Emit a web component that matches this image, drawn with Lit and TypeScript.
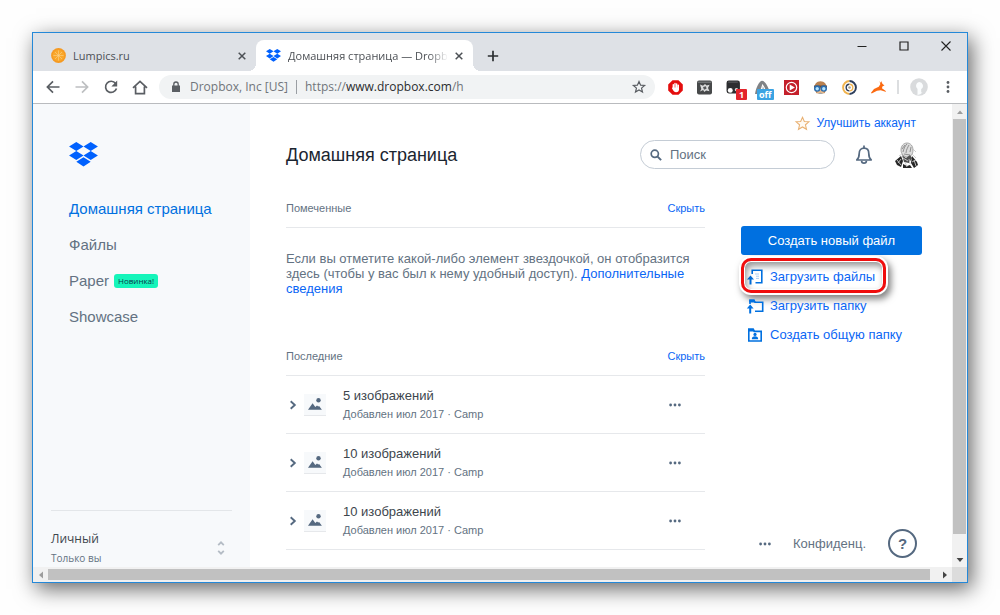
import { LitElement, html, css, svg } from "lit";
import { customElement, property } from "lit/decorators.js";

const diamonds = "M7.5 0 15 4.7 7.5 9.4 0 4.7zM22.5 0 30 4.7 22.5 9.4 15 4.7zM7.5 9.4 15 14.1 7.5 18.8 0 14.1zM22.5 9.4 30 14.1 22.5 18.8 15 14.1zM15 15.8 22.5 20.5 15 25.4 7.5 20.5z";

const glyphs: Record<string, { box: string; body: unknown }> = {
  orange: {
    box: "0 0 15 15",
    body: svg`<circle cx="7.5" cy="7.5" r="7.4" fill="#f59a23"/><circle cx="7.5" cy="7.5" r="5.8" fill="#f9a72b"/><path d="M7.5 2.400v10.200M2.400 7.500h10.200M4 4l7 7M11 4l-7 7" stroke="#fbd48b" stroke-width=".6"/>`,
  },
  dropbox: { box: "0 0 30 26", body: svg`<path fill="#0061fe" d=${diamonds}/>` },
  close: { box: "0 0 8 8", body: svg`<path d="M.7.7l6.600 6.600M7.300.7L.7 7.300" stroke="#4c5055" stroke-width="1.500"/>` },
  plus: { box: "0 0 12 12", body: svg`<path d="M6 .8v10.400M.8 6h10.400" stroke="#2b2e31" stroke-width="1.700"/>` },
  minimize: { box: "0 0 10 10", body: svg`<path d="M.5 5.500h9" stroke="#222" stroke-width="1"/>` },
  maximize: { box: "0 0 10 10", body: svg`<path d="M1 1h8v8H1z" fill="none" stroke="#222" stroke-width="1.200"/>` },
  quit: { box: "0 0 10 10", body: svg`<path d="M.5.5l9 9M9.500.5l-9 9" stroke="#222" stroke-width="1.100"/>` },
  back: { box: "0 0 14 14", body: svg`<path d="M13.500 7H1.800M7 1.400L1.400 7 7 12.600" fill="none" stroke="#5a5e63" stroke-width="1.700"/>` },
  forward: { box: "0 0 14 14", body: svg`<path d="M.5 7h11.700M7 1.400L12.600 7 7 12.600" fill="none" stroke="#bdbfc1" stroke-width="1.700"/>` },
  reload: { box: "0 0 14 14", body: svg`<path d="M11.600 3.400A5.600 5.600 0 1 0 12.500 8.600" fill="none" stroke="#5a5e63" stroke-width="1.700"/><path d="M13.200.6v5.800H7.400z" fill="#5a5e63"/>` },
  home: { box: "0 0 16 15", body: svg`<path d="M1 7.800L8 1.400l7 6.400M3.600 6.600V13.600h8.800V6.600" fill="none" stroke="#5a5e63" stroke-width="1.700"/>` },
  lock: { box: "0 0 10 12", body: svg`<path d="M1 4.600h8V11H1z" fill="#5a5e63"/><path d="M2.800 5V3.200a2.200 2.200 0 0 1 4.400 0V5" fill="none" stroke="#5a5e63" stroke-width="1.300"/>` },
  star: { box: "0 0 14 14", body: svg`<path d="M7 1.500l1.600 3.700 4 .3-3.050 2.600.95 3.900L7 9.900 3.500 12l.95-3.900L1.400 5.500l4-.3z" fill="none" stroke="#5a5e63" stroke-width="1.200"/>` },
  goldStar: { box: "0 0 14 14", body: svg`<path d="M7 1.200l1.700 3.900 4.300.3-3.250 2.800 1 4.200L7 10.200l-3.750 2.200 1-4.200L1 5.400l4.300-.3z" fill="#fffaf3" stroke="#e9b173" stroke-width="1"/>` },
  hand: {
    box: "0 0 15 15",
    body: svg`<path d="M4.500.2h6l4.300 4.300v6l-4.300 4.300h-6L.2 10.500v-6z" fill="#e40d0d"/><g stroke="#fff" stroke-width="1.400" stroke-linecap="round"><path d="M5.300 4.600v4M7 3.500v4M8.700 3.900v4M10.300 5.300v4"/></g><path d="M4.600 7.500h6.400v1.800a2.900 2.900 0 0 1-2.900 2.900c-1.700 0-2.400-.8-3.300-2.400L3.900 8z" fill="#fff"/>`,
  },
  photo: {
    box: "0 0 15 15",
    body: svg`<rect width="15" height="14" y=".5" rx="2" fill="#47494a"/><path d="M1 1.500h13v1.500H1z" fill="#6f7273"/><path d="M3 11.500l1.300-2.500L3 4.500l3 1.300L8 4l1.600 1.600 3-.9-1.600 3.300 1.500 3.300-3.400-.8-1.700 1.600-1.300-2z" fill="#dcdddd"/><path d="M6 7l3-.8.500 2.500-2.500 1z" fill="#55585a"/>`,
  },
  mask: { box: "0 0 14 14", body: svg`<rect x=".5" y=".5" width="12.500" height="12" rx="2.200" fill="#2d2e30"/><path d="M2 2h9" stroke="#5c5e61" stroke-width="1"/><circle cx="4" cy="9.700" r="2.300" fill="#fff"/><circle cx="9.800" cy="9" r="1.600" fill="#dcdcdc"/>` },
  peak: { box: "0 0 14 14", body: svg`<path d="M0 13C1 7 4 1 6.600.8 9.500.9 13 7 14 13h-3.200C10 8.500 8.500 5.500 6.800 3.800 6 7.800 4.500 11 2.500 13z" fill="#808386"/><path d="M7.300 5.500C7 9 5.500 11.500 4 13h3.500L9 9z" fill="#b9bbbd"/>` },
  play: { box: "0 0 15 15", body: svg`<path d="M0 0h15v15H0z" fill="#c4202b"/><circle cx="7.500" cy="7.500" r="5.200" fill="none" stroke="#fff" stroke-width="1.200"/><path d="M5.700 4.400l5.200 3.100-5.200 3.100z" fill="#fff"/>` },
  pilot: {
    box: "0 0 15 15",
    body: svg`<path d="M1.500 9C1 4 3.500 1.200 7.500 1.200S14 4 13.500 9l-2 4.300h-8z" fill="#b98150"/><path d="M4 8h7v3.500a3.500 2.500 0 0 1-7 0z" fill="#e9ba8c"/><path d="M1 5.500h13v2H1z" fill="#6b4b35"/><circle cx="4.200" cy="8.500" r="3.200" fill="#2b6cad"/><circle cx="10.800" cy="8.500" r="3.200" fill="#2b6cad"/><circle cx="4.200" cy="8.700" r="1.700" fill="#b5e4ff"/><circle cx="10.800" cy="8.700" r="1.700" fill="#b5e4ff"/><path d="M5 13.500c1.500-.9 3.500-.9 5 0z" fill="#5e8fb8"/>`,
  },
  ring: {
    box: "0 0 14 14",
    body: svg`<path d="M7 1A6 6 0 0 0 7 13" fill="none" stroke="#f0b34e" stroke-width="1.800"/><path d="M7 1A6 6 0 0 1 7 13" fill="none" stroke="#2e3f5c" stroke-width="1.800"/><path d="M7 3.900A3.100 3.100 0 0 0 7 10.100" fill="none" stroke="#2e3f5c" stroke-width="1.300"/><path d="M7 3.900A3.100 3.100 0 0 1 7 10.100" fill="none" stroke="#f0b34e" stroke-width="1.300"/><circle cx="7" cy="7" r="1.200" fill="#a9a18e"/>`,
  },
  deer: { box: "0 0 14 14", body: svg`<path d="M0 11.800l2.800-3.300 4.400-2.300L8.700 4 8 1.200l1.400 1.600.4-2 .8 2.800 2 1.500-1.800.8-.6 1.800 3.900 2.700-.6.600-4.400-1.400-3.500.4L.6 12.600z" fill="#fb6a11"/>` },
  person: { box: "0 0 18 18", body: svg`<circle cx="9" cy="9" r="8.800" fill="#d9dbdd"/><path d="M9 4a3.800 3.800 0 0 1 2.200 7v3.500H12.500A7 7 0 0 1 7.500 17v-6A4 4 0 0 1 9 4z" fill="#fbfdfe"/>` },
  menu: { box: "0 0 4 14", body: svg`<g fill="#5a5e63"><circle cx="2" cy="2.500" r="1.400"/><circle cx="2" cy="7" r="1.400"/><circle cx="2" cy="11.500" r="1.400"/></g>` },
  search: { box: "0 0 12 12", body: svg`<circle cx="4.800" cy="4.800" r="3.600" fill="none" stroke="#556980" stroke-width="1.700"/><path d="M7.600 7.600l3.500 3.500" stroke="#556980" stroke-width="2"/>` },
  bell: { box: "0 0 18 20", body: svg`<path d="M1.800 15c2-1.800 2.400-3.600 2.400-6.500 0-3.300 2-5.300 4.800-5.300s4.800 2 4.800 5.300c0 2.900.4 4.700 2.400 6.500z" fill="none" stroke="#556980" stroke-width="1.700" stroke-linejoin="round"/><path d="M9 .6v3M6.600 15.800a2.400 2.400 0 0 0 4.800 0" fill="none" stroke="#556980" stroke-width="1.700"/>` },
  portrait: {
    box: "0 0 28 28",
    body: svg`<path d="M8 9c0-4 2.500-7 6-7s6 3 6 7-2 7-5.500 7S8 13 8 9z" fill="#dcdcdc" stroke="#8a8a8a" stroke-width=".7"/><path d="M10 11c1-4 2-6 4-8M13 12c0-3 2-6 3-8M17 11l1-5M9 8l3-4M11 13l6 1" stroke="#6f6f6f" stroke-width=".7" fill="none"/><path d="M9 14l4 3 4-3 2 3-3 5-5-1z" fill="#505050"/><path d="M2 20l6-5 2 5-2 6-4-2zM19 15l5 6 1 3-4 3-3-5zM10 23l4 2 3-1 2 3h-9z" fill="#262626"/><path d="M5 22l3-4M21 19l2 6M12 21l2 5M16 18l1 5M6 15l3-2M19 13l4 4M20 8l3 3M4 19l4 5M19 21l4-2M10 17l5 3" stroke="#c9c9c9" stroke-width=".9"/>`,
  },
  uploadFile: { box: "0 0 16 16", body: svg`<path d="M5.200 5V1.200h9.600v12.600H8.500" fill="none" stroke="#0070e0" stroke-width="1.600"/><path d="M8 5h4M9 7.200h3M9 9.400h3" stroke="#a9cdf5" stroke-width="1"/><path d="M3.500 15.500V9" stroke="#0070e0" stroke-width="2"/><path d="M0 10.500l3.500-4 3.500 4z" fill="#0070e0"/>` },
  uploadFolder: { box: "0 0 16 16", body: svg`<path d="M3 6V2.300h4l1 2h7.700v8.900H8" fill="none" stroke="#0070e0" stroke-width="1.600"/><path d="M2.300 1.500h5.100l1.300 3H2.300z" fill="#0070e0"/><path d="M3.200 15.500V9" stroke="#0070e0" stroke-width="2"/><path d="M-.2 10.500l3.400-4 3.400 4z" fill="#0070e0"/>` },
  sharedFolder: { box: "0 0 16 16", body: svg`<path d="M1.800 14V2.400h4.400l1 2h7V14z" fill="none" stroke="#0070e0" stroke-width="1.600"/><path d="M1 1.600h5.700l1.300 2.800H1z" fill="#0070e0"/><circle cx="8" cy="7.400" r="1.600" fill="#0070e0"/><path d="M4.800 12.200c0-2 1.300-2.900 3.200-2.900s3.200.9 3.200 2.900z" fill="#0070e0"/>` },
  chevron: { box: "0 0 8 10", body: svg`<path d="M1.700 1.200L5.800 5l-4.100 3.800" fill="none" stroke="#556980" stroke-width="1.900"/>` },
  picture: { box: "0 0 16 14", body: svg`<circle cx="11.500" cy="3.200" r="2.200" fill="#556980"/><path d="M1 12.700l4.600-6.500 2.700 3.900 1.700-1.700 1.200 1.200.9-.7 2.800 3.800z" fill="#556980"/>` },
  dots: { box: "0 0 12 4", body: svg`<g fill="#556980"><circle cx="1.600" cy="2" r="1.400"/><circle cx="6" cy="2" r="1.400"/><circle cx="10.400" cy="2" r="1.400"/></g>` },
  sorter: { box: "0 0 8 14", body: svg`<path d="M1.200 4.200L4 1.300l2.800 2.900M1.200 9.800L4 12.700l2.800-2.900" fill="none" stroke="#b4bcc5" stroke-width="1.800"/>` },
  up: { box: "0 0 8 8", body: svg`<path d="M1 6l3-3.600L7 6z" fill="#9d9d9d"/>` },
  down: { box: "0 0 8 8", body: svg`<path d="M.6 2h6.800L4 6z" fill="#454545"/>` },
  left: { box: "0 0 8 8", body: svg`<path d="M6 .6v6.800L2 4z" fill="#9d9d9d"/>` },
  right: { box: "0 0 8 8", body: svg`<path d="M2 .6v6.800L6 4z" fill="#454545"/>` },
};

const icon = (name: string, width: number, height = width) => svg`
  <svg width=${width} height=${height} viewBox=${glyphs[name].box} aria-hidden="true">${glyphs[name].body}</svg>`;

const reset = css`
  * { box-sizing: border-box; }
  svg { display: block; flex: none; overflow: visible; }
  button { font: inherit; color: inherit; background: none; border: 0; padding: 0; margin: 0; display: flex; align-items: center; justify-content: center; cursor: pointer; }
  a { text-decoration: none; color: #0a66f5; }
  ul { list-style: none; margin: 0; padding: 0; }
  h1, h2, h3, p { margin: 0; font-weight: 400; }
`;

@customElement("browser-bar")
class BrowserBar extends LitElement {
  static styles = [reset, css`
    :host { display: block; font: 11px/16px "Open Sans", "Noto Sans", sans-serif; color: #4c5055; }
    .strip { display: flex; height: 38px; background: #dee1e6; }
    .tab { display: flex; align-items: center; gap: 7px; height: 31px; margin-top: 7px; }
    .idle { width: 223px; padding: 0 10px 0 18px; }
    .active { position: relative; width: 217px; padding: 0 10px; background: #fff; border-radius: 8px 8px 0 0; }
    .active::before, .active::after { content: ""; position: absolute; bottom: 0; width: 8px; height: 8px; }
    .active::before { right: 100%; background: radial-gradient(circle at 0 0, transparent 8px, #fff 8px); }
    .active::after { left: 100%; background: radial-gradient(circle at 100% 0, transparent 8px, #fff 8px); }
    .name { flex: 1; min-width: 0; white-space: nowrap; }
    .fade { -webkit-mask-image: linear-gradient(to right, #000 88%, transparent); mask-image: linear-gradient(to right, #000 88%, transparent); }
    .new { width: 40px; margin-top: 7px; }
    .controls { display: flex; margin-left: auto; height: 26px; }
    .controls button { width: 42px; }
    .tools { display: flex; align-items: center; height: 33px; padding: 0 5px; background: #fff; border-bottom: 1px solid #b9bbbe; }
    .nav, .ext { position: relative; width: 29px; height: 24px; flex: none; }
    .address { display: flex; align-items: center; flex: 1; min-width: 0; height: 24px; margin: 0 6px 0 5px; padding: 0 9px 0 12px; border-radius: 12px; background: #f1f3f4; color: #70757a; font-size: 12px; white-space: nowrap; overflow: hidden; }
    .site { gap: 9px; padding-right: 8px; }
    .url { flex: 1; padding-left: 8px; border-left: 1px solid #9a9ea3; line-height: 14px; }
    .host { color: #2a2c2f; }
    .badge { position: absolute; left: 17px; top: 14px; padding: 0 3px; border-radius: 1px; background: #e3242b; color: #fff; font-weight: 700; font-size: 9px; line-height: 11px; }
    .off { left: 9px; padding: 0 2px; background: #3aa3e3; }
    .rule { width: 2px; height: 14px; margin: 0 5px 0 4px; background: #dcdee0; }
  `];

  private extensions = [
    { name: "hand", label: "Блокировщик" },
    { name: "photo", label: "Снимки" },
    { name: "mask", label: "Скрипты", badge: "1" },
    { name: "peak", label: "Анализ", badge: "off" },
    { name: "play", label: "Видео" },
    { name: "pilot", label: "Пилот" },
    { name: "ring", label: "Кольцо" },
    { name: "deer", label: "Олень" },
  ];

  render() {
    return html`
      <div class="strip">
        <div class="tab idle">
          ${icon("orange", 15)}<span class="name">Lumpics.ru</span>
          <button aria-label="Закрыть вкладку">${icon("close", 8)}</button>
        </div>
        <div class="tab active">
          ${icon("dropbox", 15, 13)}<span class="name fade">Домашняя страница — Dropbox</span>
          <button aria-label="Закрыть вкладку">${icon("close", 8)}</button>
        </div>
        <button class="new" aria-label="Новая вкладка">${icon("plus", 12)}</button>
        <div class="controls">
          <button aria-label="Свернуть">${icon("minimize", 10)}</button>
          <button aria-label="Развернуть">${icon("maximize", 10)}</button>
          <button aria-label="Закрыть">${icon("quit", 10)}</button>
        </div>
      </div>
      <div class="tools">
        <button class="nav" aria-label="Назад">${icon("back", 14)}</button>
        <button class="nav" aria-label="Вперёд">${icon("forward", 14)}</button>
        <button class="nav" aria-label="Обновить">${icon("reload", 14)}</button>
        <button class="nav" aria-label="Домой">${icon("home", 16, 15)}</button>
        <div class="address">
          <button class="site">${icon("lock", 10, 12)}Dropbox, Inc [US]</button>
          <span class="url">https://<span class="host">www.dropbox.com</span>/h</span>
          <button aria-label="В закладки">${icon("star", 14)}</button>
        </div>
        ${this.extensions.map((e) => html`
          <button class="ext" aria-label=${e.label}>${icon(e.name, 15)}
            ${e.badge ? html`<span class="badge ${e.badge}">${e.badge}</span>` : ""}
          </button>`)}
        <span class="rule"></span>
        <button class="nav" aria-label="Профиль">${icon("person", 18)}</button>
        <button class="nav" aria-label="Меню">${icon("menu", 4, 14)}</button>
      </div>`;
  }
}

@customElement("side-nav")
class SideNav extends LitElement {
  static styles = [reset, css`
    :host { display: flex; flex-direction: column; padding: 38px 18px 0; background: #f7f9fb; color: #637282; }
    .logo { padding: 0 18px; }
    .links { flex: 1; padding: 24px 18px 0; font-size: 15px; line-height: 36px; }
    .links li { display: flex; align-items: center; gap: 5px; }
    .links a { color: #637282; }
    .links .current { color: #0070e0; }
    .badge { padding: 0 4px; border-radius: 3px; background: #15f5ba; color: #0c3a4a; font: 8px/14px "Open Sans", "Noto Sans", sans-serif; }
    .account { width: 100%; justify-content: space-between; padding: 18px 7px 0 0; border-top: 1px solid #e3e6e9; text-align: left; font: 12px/18px "Open Sans", "Noto Sans", sans-serif; }
    .who { display: block; line-height: 20px; color: #3d464d; }
    .scope { display: block; font-size: 10px; }
  `];

  render() {
    return html`
      <a class="logo" href="#" aria-label="Dropbox">${icon("dropbox", 29, 25)}</a>
      <nav class="links">
        <ul>
          <li><a class="current" href="#">Домашняя страница</a></li>
          <li><a href="#">Файлы</a></li>
          <li><a href="#">Paper</a><span class="badge">Новинка!</span></li>
          <li><a href="#">Showcase</a></li>
        </ul>
      </nav>
      <button class="account">
        <span><span class="who">Личный</span><span class="scope">Только вы</span></span>
        ${icon("sorter", 8, 14)}
      </button>`;
  }
}

@customElement("section-head")
class SectionHead extends LitElement {
  @property() label = "";
  static styles = [reset, css`
    :host { display: flex; box-sizing: border-box; justify-content: space-between; align-items: center; height: 39px; border-bottom: 1px solid #e6e8eb; font-size: 11px; line-height: 16px; }
    h2 { font-size: 11px; color: #637282; }
    button { color: #0a66f5; }
  `];
  render() {
    return html`<h2>${this.label}</h2><button>Скрыть</button>`;
  }
}

@customElement("home-page")
class HomePage extends LitElement {
  static styles = [reset, css`
    :host { display: flex; flex-direction: column; min-width: 0; padding: 10px 30px 0 36px; color: #637282; }
    .upgrade { display: flex; align-items: center; align-self: flex-end; gap: 6px; margin-right: 6px; font-size: 12px; line-height: 18px; }
    .head { display: flex; align-items: center; margin-top: 8px; height: 29px; }
    h1 { flex: 1; font-size: 18px; line-height: 24px; color: #1b2530; }
    .search { display: flex; align-items: center; gap: 8px; width: 195px; height: 29px; padding: 0 9px; border: 1px solid #c4ccd5; border-radius: 15px; }
    .search input { flex: 1; min-width: 0; border: 0; padding: 0; outline: 0; background: none; font: inherit; font-size: 13px; color: #637282; }
    .search input::placeholder { color: #637282; opacity: 1; }
    .bell { margin: 0 20px; }
    .avatar { margin-right: 1px; }
    .body { flex: 1; display: grid; grid-template-columns: minmax(0, 1fr) 181px; gap: 36px; padding-top: 20px; }
    .hint { height: 109px; padding-top: 23px; font-size: 13px; line-height: 15px; }
    .row { display: flex; align-items: center; height: 58px; padding: 0 24px 0 3px; border-bottom: 1px solid #e6e8eb; }
    .thumb { display: flex; align-items: center; justify-content: center; width: 22px; height: 22px; margin: 0 17px 0 7px; background: #f7f9fb; border-bottom: 1px solid #e6e8eb; }
    .text { flex: 1; }
    h3 { font-size: 13px; line-height: 20px; color: #3d464d; }
    .text p { font-size: 11px; line-height: 17px; }
    .side { display: flex; flex-direction: column; padding-top: 37px; font-size: 13px; line-height: 20px; }
    .create { width: 100%; height: 29px; border-radius: 3px; background: #0070e0; color: #fff; }
    .action { position: relative; gap: 7px; height: 29px; padding-left: 6px; color: #0a66f5; }
    .side li { display: flex; }
    .side ul { padding-top: 7px; }
    .marked::before { content: ""; position: absolute; left: 0; right: -11px; top: -4px; bottom: -2px; border: 3px solid #f00d0d; border-radius: 10px; box-shadow: 0 0 0 2px #fff, inset 0 0 0 1px #fff, 3px 4px 7px 2px rgba(0, 0, 0, .5), inset 2px 4px 6px 1px rgba(0, 0, 0, .4); }
    .foot { display: flex; align-items: center; justify-content: flex-end; gap: 22px; margin-top: auto; padding: 0 5px 9px 0; }
    .foot a { color: #637282; }
    .help { width: 29px; height: 29px; border: 2px solid #556980; border-radius: 50%; color: #556980; font-size: 15px; font-weight: 700; }
  `];

  private recents = ["5 изображений", "10 изображений", "10 изображений"];
  private actions = [
    { name: "uploadFile", label: "Загрузить файлы", marked: true },
    { name: "uploadFolder", label: "Загрузить папку" },
    { name: "sharedFolder", label: "Создать общую папку" },
  ];

  render() {
    return html`
      <a class="upgrade" href="#">${icon("goldStar", 15)}Улучшить аккаунт</a>
      <header class="head">
        <h1>Домашняя страница</h1>
        <label class="search">${icon("search", 12)}<input type="search" placeholder="Поиск" aria-label="Поиск"></label>
        <button class="bell" aria-label="Уведомления">${icon("bell", 18, 20)}</button>
        <button class="avatar" aria-label="Аккаунт">${icon("portrait", 28)}</button>
      </header>
      <div class="body">
        <main>
          <section-head label="Помеченные"></section-head>
          <p class="hint">Если вы отметите какой-либо элемент звездочкой, он отобразится здесь (чтобы у вас был к нему удобный доступ). <a href="#">Дополнительные сведения</a></p>
          <section-head label="Последние"></section-head>
          <ul>
            ${this.recents.map((title) => html`
              <li class="row">
                <button aria-label="Развернуть">${icon("chevron", 8, 10)}</button>
                <span class="thumb">${icon("picture", 16, 14)}</span>
                <div class="text"><h3>${title}</h3><p>Добавлен июл 2017 · Camp</p></div>
                <button aria-label="Ещё">${icon("dots", 12, 4)}</button>
              </li>`)}
          </ul>
        </main>
        <aside class="side">
          <button class="create">Создать новый файл</button>
          <ul>
            ${this.actions.map((a) => html`
              <li><button class="action ${a.marked ? "marked" : ""}">${icon(a.name, 16)}${a.label}</button></li>`)}
          </ul>
          <div class="foot">
            <button aria-label="Ещё">${icon("dots", 12, 4)}</button>
            <a href="#">Конфиденц.</a>
            <button class="help" aria-label="Справка">?</button>
          </div>
        </aside>
      </div>`;
  }
}

@customElement("app-root")
class AppRoot extends LitElement {
  static styles = [reset, css`
    :host { display: flex; min-height: 100vh; box-sizing: border-box; padding: 32px; background: #fefefe; font-family: "Liberation Sans", Arial, sans-serif; }
    .window { flex: 1; min-width: 0; display: flex; flex-direction: column; border: 1px solid #2488d8; background: #fff; box-shadow: 4px 6px 20px rgba(0, 0, 0, .6); }
    .view { flex: 1; display: grid; grid-template-columns: 217px minmax(0, 1fr) 15px; grid-template-rows: 1fr 15px; }
    .vertical, .horizontal { display: flex; align-items: center; background: #f1f1f1; }
    .vertical { flex-direction: column; }
    .horizontal { grid-column: 1 / 3; }
    .arrow { display: flex; align-items: center; justify-content: center; flex: none; width: 15px; height: 15px; }
    .thumb { background: #c1c1c1; }
    .vertical .thumb { width: 13px; flex: 415; }
    .vertical .rest { flex: 18; }
    .horizontal .thumb { height: 11px; flex: 882; }
    .horizontal .rest { flex: 7; }
    .corner { background: #dcdcdc; }
  `];

  render() {
    return html`
      <div class="window">
        <browser-bar></browser-bar>
        <div class="view">
          <side-nav></side-nav>
          <home-page></home-page>
          <div class="vertical">
            <span class="arrow">${icon("up", 8)}</span><span class="thumb"></span><span class="rest"></span>
            <span class="arrow">${icon("down", 8)}</span>
          </div>
          <div class="horizontal">
            <span class="arrow">${icon("left", 8)}</span><span class="thumb"></span><span class="rest"></span>
            <span class="arrow">${icon("right", 8)}</span>
          </div>
          <div class="corner"></div>
        </div>
      </div>`;
  }
}
